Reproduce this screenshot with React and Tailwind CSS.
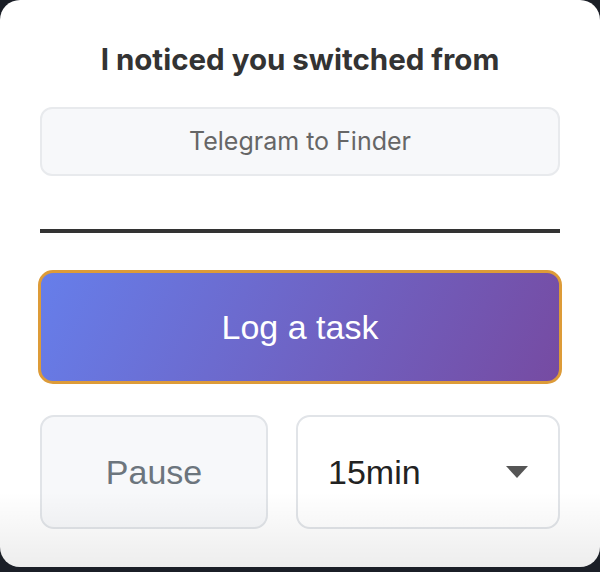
import React from 'react';

function Caret() {
  return (
    <svg width="22" height="12" viewBox="0 0 22 12" className="shrink-0">
      <path d="M0 0 L22 0 L11 12 Z" fill="#555555" />
    </svg>
  );
}

export default function App() {
  return (
    <div className="w-[600px] h-[572px] bg-[#1b1f27] font-['Inter',sans-serif]">
      <div className="relative w-[600px] h-[567px] bg-white rounded-[20px] overflow-hidden px-10 pt-[43px]">
        <div className="text-center text-[29.5px] leading-[32px] font-bold text-[#333333]">
          I noticed you switched from
        </div>

        <div className="mt-[32px] h-[69px] rounded-[12px] border-2 border-[#e8eaed] bg-[#f7f8fa] flex items-center justify-center text-[25px] text-[#666666]">
          Telegram to Finder
        </div>

        <div className="mt-[53px] h-[4px] bg-[#333333]" />

        <button className="mt-[37px] -mx-[2px] w-[524px] h-[114px] rounded-[15px] border-[3px] border-[#dd9b38] bg-[linear-gradient(115deg,#667eea_0%,#764ba2_100%)] flex items-center justify-center text-white text-[34px] font-['Liberation_Sans',sans-serif]">
          Log a task
        </button>

        <div className="mt-[31px] flex gap-[28px]">
          <button className="w-[228px] h-[114px] rounded-[14px] border-2 border-[#e1e4e8] bg-[#f7f8fa] flex items-center justify-center text-[34px] text-[#6c757d] font-['Liberation_Sans',sans-serif]">
            Pause
          </button>
          <div className="flex-1 h-[114px] rounded-[14px] border-2 border-[#e1e4e8] bg-white flex items-center justify-between pl-[30px] pr-[30px] text-[34px] text-[#222222] font-['Liberation_Sans',sans-serif]">
            <span>15min</span>
            <Caret />
          </div>
        </div>

        <div className="pointer-events-none absolute left-0 right-0 bottom-0 h-[75px] bg-gradient-to-b from-[#ffffff00] to-[#00000012]" />
      </div>
    </div>
  );
}
